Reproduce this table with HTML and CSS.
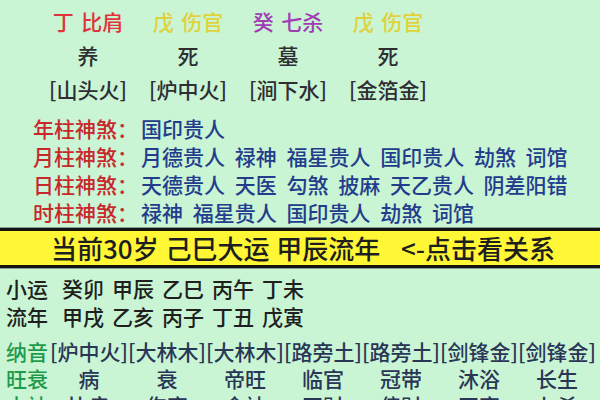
FILE: index.html
```html
<!DOCTYPE html>
<html lang="zh-CN">
<head>
<meta charset="utf-8">
<link rel="stylesheet" href="styles.css">
</head>
<body>
<section class="pillars">
  <span class="red">丁 比肩</span>
  <span class="yellow">戊 伤官</span>
  <span class="purple">癸 七杀</span>
  <span class="yellow">戊 伤官</span>
  <span class="dark">养</span>
  <span class="dark">死</span>
  <span class="dark">墓</span>
  <span class="dark">死</span>
  <span class="dark">[山头火]</span>
  <span class="dark">[炉中火]</span>
  <span class="dark">[涧下水]</span>
  <span class="dark">[金箔金]</span>
</section>

<section class="shensha">
  <div class="ss-row"><span class="ss-label">年柱神煞：</span><span class="ss-val">国印贵人</span></div>
  <div class="ss-row"><span class="ss-label">月柱神煞：</span><span class="ss-val">月德贵人 禄神 福星贵人 国印贵人 劫煞 词馆</span></div>
  <div class="ss-row"><span class="ss-label">日柱神煞：</span><span class="ss-val">天德贵人 天医 勾煞 披麻 天乙贵人 阴差阳错</span></div>
  <div class="ss-row"><span class="ss-label">时柱神煞：</span><span class="ss-val">禄神 福星贵人 国印贵人 劫煞 词馆</span></div>
</section>

<div class="bar">
  <div class="bar-inner">当前30岁 己巳大运 甲辰流年 &nbsp; &lt;-点击看关系</div>
</div>

<section class="luck">
  <div class="luck-row"><span class="luck-label">小运</span><span>癸卯</span><span>甲辰</span><span>乙巳</span><span>丙午</span><span>丁未</span></div>
  <div class="luck-row"><span class="luck-label">流年</span><span>甲戌</span><span>乙亥</span><span>丙子</span><span>丁丑</span><span>戊寅</span></div>
</section>

<section class="table">
  <span class="t-label">纳音</span>
  <span class="t-val">[炉中火]</span>
  <span class="t-val">[大林木]</span>
  <span class="t-val">[大林木]</span>
  <span class="t-val">[路旁土]</span>
  <span class="t-val">[路旁土]</span>
  <span class="t-val">[剑锋金]</span>
  <span class="t-val">[剑锋金]</span>

  <span class="t-label">旺衰</span>
  <span class="t-val">病</span>
  <span class="t-val">衰</span>
  <span class="t-val">帝旺</span>
  <span class="t-val">临官</span>
  <span class="t-val">冠带</span>
  <span class="t-val">沐浴</span>
  <span class="t-val">长生</span>

  <span class="t-label">十神</span>
  <span class="t-val">比肩</span>
  <span class="t-val">伤官</span>
  <span class="t-val">食神</span>
  <span class="t-val">正财</span>
  <span class="t-val">偏财</span>
  <span class="t-val">正官</span>
  <span class="t-val">七杀</span>
</section>
</body>
</html>
```

FILE: styles.css
```css
html, body {
  margin: 0;
  padding: 0;
}

body {
  width: 600px;
  height: 400px;
  overflow: hidden;
  background: #c9f5d4;
  font-family: "Noto Sans CJK SC", "Noto Sans", sans-serif;
  font-size: 21px;
  font-weight: 500;
  line-height: 1;
  color: #2a2a2a;
}

.pillars {
  display: grid;
  grid-template-columns: repeat(4, 100px);
  grid-auto-rows: 34px;
  line-height: 34px;
  align-items: center;
  justify-items: center;
  padding: 4px 0 0 38px;
  word-spacing: 3px;
}

.red { color: #e0343a; }
.yellow { color: #e0d238; }
.purple { color: #a03cb4; }
.dark { color: #2e2e33; }

.shensha {
  margin-top: 8px;
  padding-left: 33px;
}

.ss-row {
  display: flex;
  align-items: center;
  height: 28px;
  line-height: 28px;
}

.ss-label {
  width: 108px;
  color: #c8282c;
}

.ss-val {
  color: #243c8c;
  word-spacing: 5px;
}

.bar {
  margin-top: 1px;
  border-top: 1px solid #8a9a90;
  border-bottom: 1px solid #8a9a90;
}

.bar-inner {
  height: 34px;
  line-height: 34px;
  border-top: 3px solid #141414;
  border-bottom: 3px solid #141414;
  background: #fff735;
  display: flex;
  align-items: center;
  justify-content: center;
  font-size: 26px;
  color: #1e1e1e;
  padding-left: 6px;
  word-spacing: 1px;
}

.luck {
  padding: 5px 0 0 6px;
}

.luck-row {
  display: flex;
  align-items: center;
  gap: 8px;
  height: 28px;
  line-height: 28px;
  color: #202020;
}

.luck-label {
  margin-right: 6px;
}

.table {
  margin-top: 8px;
  padding-left: 6px;
  display: grid;
  grid-template-columns: 44px repeat(7, 78px);
  grid-auto-rows: 27px;
  line-height: 27px;
  align-items: center;
}

.t-label {
  color: #1f9a4c;
}

.t-val {
  text-align: center;
  color: #2a3656;
  white-space: nowrap;
}
```
